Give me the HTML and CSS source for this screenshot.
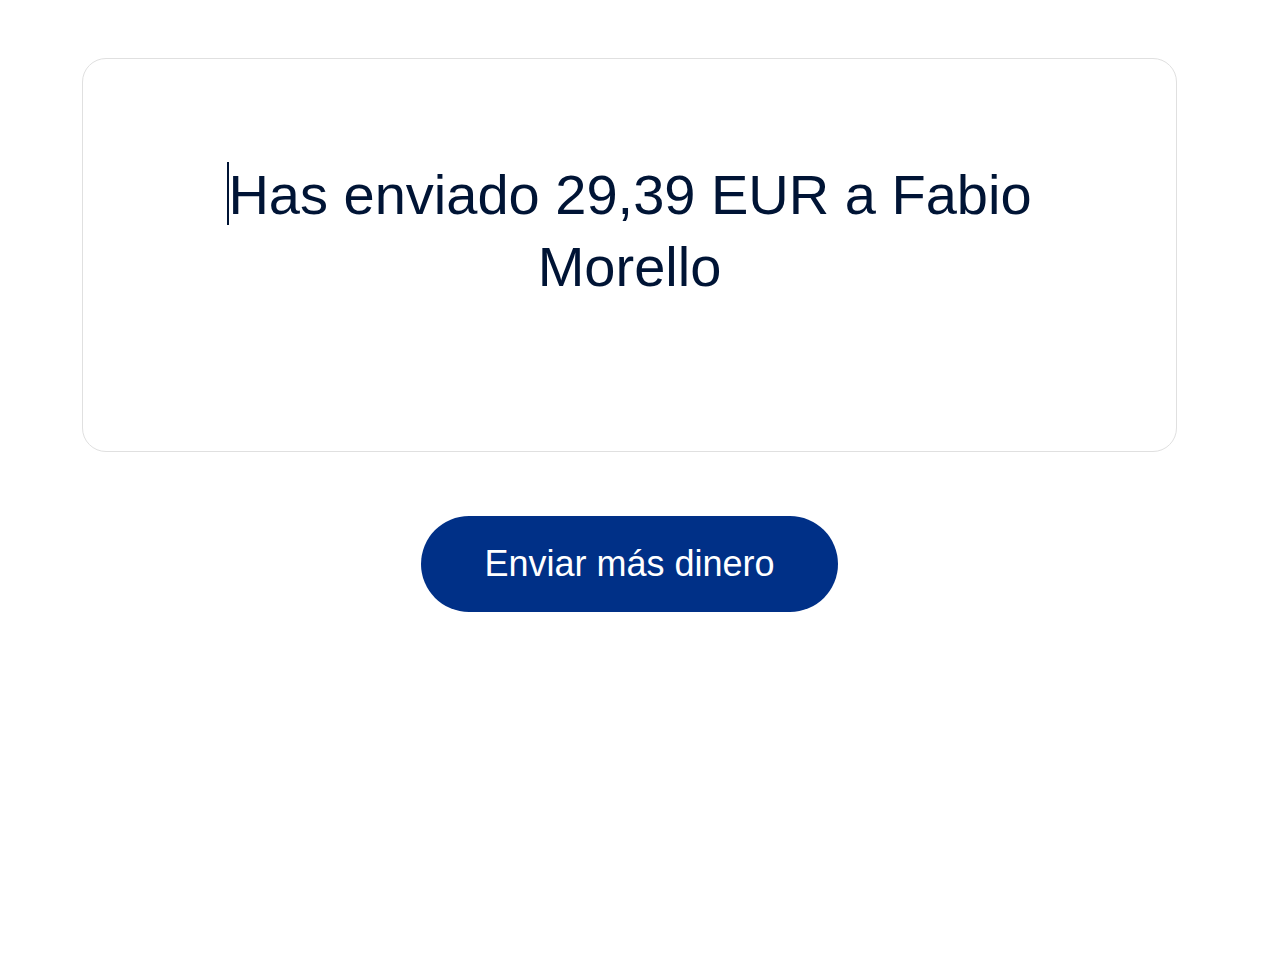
FILE: index.html
```html
<!DOCTYPE html>
<html lang="es">
<head>
<meta charset="utf-8">
<title>Enviado</title>
<link rel="stylesheet" href="styles.css">
</head>
<body>
<main class="page">
  <section class="card">
    <h1 class="message"><span class="caret"></span>Has enviado 29,39 EUR a Fabio Morello</h1>
  </section>
  <div class="actions">
    <button class="btn-primary" type="button">Enviar más dinero</button>
  </div>
</main>
</body>
</html>
```

FILE: styles.css
```css
* { box-sizing: border-box; }
html, body { margin: 0; padding: 0; background: #ffffff; }
body {
  font-family: "Liberation Sans", Arial, sans-serif;
  color: #001435;
}
.page {
  width: 1095px;
  margin-left: 82px;
  padding-top: 58px;
}
.card {
  border: 1px solid #e0e0e0;
  border-radius: 24px;
  min-height: 394px;
  padding: 100px 40px 40px;
  display: flex;
  justify-content: center;
}
.message {
  margin: 0;
  max-width: 880px;
  font-size: 56px;
  font-weight: 400;
  line-height: 72px;
  text-align: center;
}
.caret {
  display: inline-block;
  width: 0;
  height: 63px;
  border-left: 2px solid #001435;
  margin-right: -1px;
  vertical-align: -11px;
}
.actions {
  display: flex;
  justify-content: center;
  padding-top: 64px;
}
.btn-primary {
  width: 417px;
  height: 96px;
  border: 0;
  border-radius: 48px;
  background: #003087;
  color: #ffffff;
  font-family: "Liberation Sans", Arial, sans-serif;
  font-size: 36px;
  padding: 0;
}
```
